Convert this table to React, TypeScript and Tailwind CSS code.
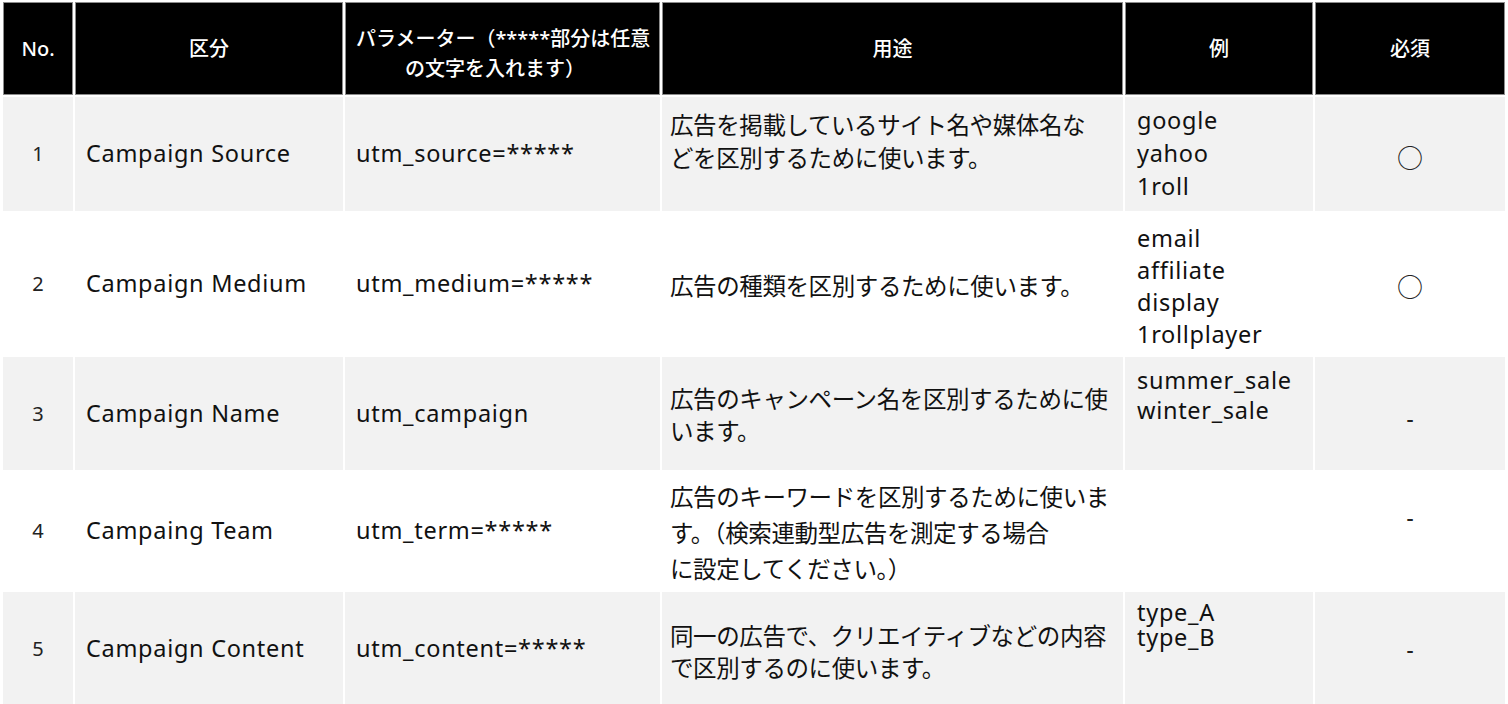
import React from "react";

type Row = {
  no: string;
  name: string;
  param: string;
  use: string[];
  useClass: string;
  examples: string[];
  exClass: string;
  req: string;
  reqClass: string;
  height: string;
  bg: string;
};

const rows: Row[] = [
  {
    no: "1",
    name: "Campaign Source",
    param: "utm_source=*****",
    use: ["広告を掲載しているサイト名や媒体名な", "どを区別するために使います。"],
    useClass: "leading-[33px] pb-[27px]",
    examples: ["google", "yahoo", "1roll"],
    exClass: "leading-[33px] pb-[2px]",
    req: "○",
    reqClass: "pt-[4px]",
    height: "h-[114px]",
    bg: "bg-[#f2f2f2]",
  },
  {
    no: "2",
    name: "Campaign Medium",
    param: "utm_medium=*****",
    use: ["広告の種類を区別するために使います。"],
    useClass: "leading-[33px] pt-[2px]",
    examples: ["email", "affiliate", "display", "1rollplayer"],
    exClass: "leading-[32px] pt-[4px]",
    req: "○",
    reqClass: "pt-[2px]",
    height: "h-[142px]",
    bg: "bg-white",
  },
  {
    no: "3",
    name: "Campaign Name",
    param: "utm_campaign",
    use: ["広告のキャンペーン名を区別するために使", "います。"],
    useClass: "leading-[32px] pt-[0px]",
    examples: ["summer_sale", "winter_sale"],
    exClass: "leading-[30px] pb-[38px]",
    req: "-",
    reqClass: "pt-[10px]",
    height: "h-[113px]",
    bg: "bg-[#f2f2f2]",
  },
  {
    no: "4",
    name: "Campaing Team",
    param: "utm_term=*****",
    use: ["広告のキーワードを区別するために使いま", "す。（検索連動型広告を測定する場合", "に設定してください。）"],
    useClass: "leading-[36px] pt-[2px]",
    examples: [],
    exClass: "",
    req: "-",
    reqClass: "pb-[28px]",
    height: "h-[118px]",
    bg: "bg-white",
  },
  {
    no: "5",
    name: "Campaign Content",
    param: "utm_content=*****",
    use: ["同一の広告で、クリエイティブなどの内容", "で区別するのに使います。"],
    useClass: "leading-[32px] pt-[4px]",
    examples: ["type_A", "type_B"],
    exClass: "leading-[25px] pb-[48px]",
    req: "-",
    reqClass: "pt-[0px]",
    height: "h-[114px]",
    bg: "bg-[#f2f2f2]",
  },
];

const cols = "grid grid-cols-[70px_268px_315px_461px_188px_190px] gap-[2px]";
const latin = "font-['Noto_Sans','Noto_Sans_CJK_JP',sans-serif] text-[23.5px] tracking-[0.03em] text-[#111]";
const jp = "font-['Noto_Sans_CJK_JP','Noto_Sans',sans-serif] text-[23.5px] tracking-[-0.4px] text-[#111]";
const headFont = "font-['Noto_Sans','Noto_Sans_CJK_JP',sans-serif] text-[20px] font-medium leading-[30px] text-white";

const HeadCell = ({ children }: { children: React.ReactNode }) => (
  <div className={`flex items-center justify-center border border-[#8c8c8c] bg-black text-center ${headFont}`}>
    {children}
  </div>
);

export default function App() {
  return (
    <div className="h-[704px] w-[1508px] overflow-hidden bg-white pl-[3px] pt-[2px]">
      <div className="flex flex-col gap-[2px]">
        {/* header */}
        <div className={`${cols} h-[93px]`}>
          <HeadCell>No.</HeadCell>
          <HeadCell>区分</HeadCell>
          <div className={`flex flex-col justify-center border border-[#8c8c8c] bg-black pt-[10px] ${headFont}`}>
            <span className="whitespace-nowrap pl-[10px]">パラメーター（*****部分は任意</span>
            <span className="whitespace-nowrap pl-[59px]">の文字を入れます）</span>
          </div>
          <HeadCell>用途</HeadCell>
          <HeadCell>例</HeadCell>
          <HeadCell>必須</HeadCell>
        </div>

        {rows.map((r) => (
          <div key={r.no} className={`${cols} ${r.height}`}>
            <div className={`${r.bg} flex items-center justify-center font-['Noto_Sans',sans-serif] text-[20px] text-[#222]`}>
              {r.no}
            </div>
            <div className={`${r.bg} ${latin} flex items-center whitespace-nowrap pl-[11px]`}>{r.name}</div>
            <div className={`${r.bg} ${latin} flex items-center whitespace-nowrap pl-[11px]`}>{r.param}</div>
            <div className={`${r.bg} ${jp} ${r.useClass} flex flex-col justify-center whitespace-nowrap pl-[8px]`}>
              {r.use.map((line) => (
                <div key={line}>{line}</div>
              ))}
            </div>
            <div className={`${r.bg} ${latin} ${r.exClass} flex flex-col justify-center whitespace-nowrap pl-[12px] tracking-[0.02em]`}>
              {r.examples.map((ex) => (
                <div key={ex}>{ex}</div>
              ))}
            </div>
            <div
              className={`${r.bg} ${r.reqClass} flex items-center justify-center ${
                r.req === "○"
                  ? "font-['Noto_Sans_CJK_JP',sans-serif] text-[26px] text-[#222]"
                  : "font-['Noto_Sans',sans-serif] text-[22px] font-medium text-[#222]"
              }`}
            >
              {r.req}
            </div>
          </div>
        ))}
      </div>
    </div>
  );
}
